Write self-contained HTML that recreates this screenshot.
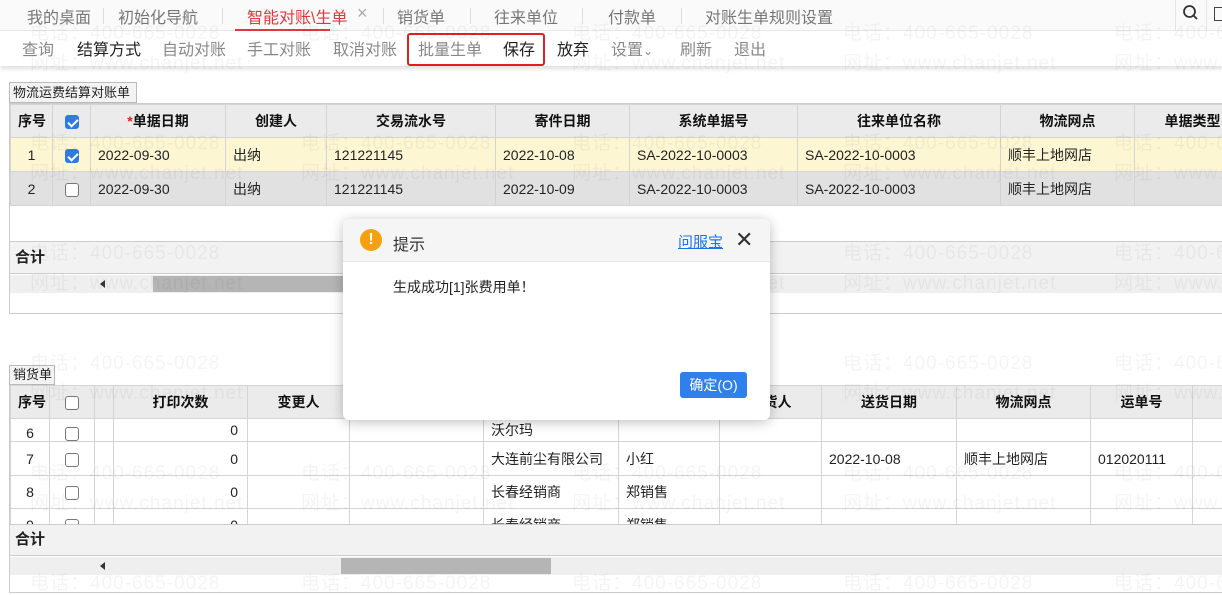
<!DOCTYPE html>
<html><head><meta charset="utf-8"><style>
*{margin:0;padding:0;box-sizing:border-box}
body{width:1222px;height:595px;overflow:hidden;background:#fff;position:relative;font-family:"Liberation Sans","Noto Sans CJK SC",sans-serif;color:#222}
.a{position:absolute}
.tab{position:absolute;top:4px;font-size:16px;color:#777;white-space:nowrap}
.sep{position:absolute;top:8px;width:1px;height:16px;background:#ddd}
.tb{position:absolute;top:36px;font-size:16px;color:#888;white-space:nowrap}
.tb.b{color:#222}
table{border-collapse:collapse;position:absolute;table-layout:fixed}
td,th{border:1px solid #d4d4d4;font-size:14px;white-space:nowrap;overflow:hidden;padding:0 7px;text-align:left;font-weight:normal}
th{background:#ebebeb;font-weight:bold;text-align:center;color:#111}
.c{text-align:center;padding:0}
.r{text-align:right;padding-right:9px}
.cb{display:inline-block;width:14px;height:14px;border:1px solid #777;border-radius:3px;background:#fff;vertical-align:middle}
.cb.on{background:#2f7be0;border-color:#2f7be0;position:relative}
.cb.on:after{content:"";position:absolute;left:4px;top:1px;width:4px;height:8px;border:solid #fff;border-width:0 2px 2px 0;transform:rotate(45deg)}
.wm{position:absolute;font-size:19px;color:rgba(0,0,0,0.045);white-space:nowrap;letter-spacing:1px;pointer-events:none}
</style></head><body>
<!-- tab bar -->
<div class="a" style="left:0;top:0;width:1222px;height:31px;background:#fafafa;border-bottom:1px solid #e8e8e8"></div>
<div class="tab" style="left:27px">我的桌面</div><div class="sep" style="left:103px"></div>
<div class="tab" style="left:118px">初始化导航</div><div class="sep" style="left:222px"></div>
<div class="tab" style="left:247px;color:#e0383e">智能对账\生单</div><div class="tab" style="left:357px;top:3px;color:#aaa;font-size:18px">×</div>
<div class="a" style="left:235px;top:29px;width:95px;height:2px;background:#e0383e"></div>
<div class="sep" style="left:383px"></div>
<div class="tab" style="left:397px">销货单</div><div class="sep" style="left:470px"></div>
<div class="tab" style="left:494px">往来单位</div><div class="sep" style="left:582px"></div>
<div class="tab" style="left:608px">付款单</div><div class="sep" style="left:681px"></div>
<div class="tab" style="left:705px">对账生单规则设置</div>
<div class="sep" style="left:1175px;top:0;height:31px;background:#e4e4e4"></div>
<svg class="a" style="left:1182px;top:4px" width="18" height="18" viewBox="0 0 18 18"><circle cx="7.5" cy="7.5" r="5.5" fill="none" stroke="#333" stroke-width="1.8"/><path d="M11.5 11.5L15 15" stroke="#333" stroke-width="1.8"/></svg>
<div class="sep" style="left:1206px;top:0;height:31px;background:#e4e4e4"></div>
<div class="a" style="left:1214px;top:7px;width:8px;height:14px;border:1.5px solid #444;border-right:none"></div>
<!-- toolbar -->
<div class="a" style="left:0;top:32px;width:1222px;height:34px;background:#fff;box-shadow:0 3px 4px rgba(0,0,0,.12)"></div>
<div class="tb" style="left:22px">查询</div>
<div class="tb b" style="left:77px">结算方式</div>
<div class="tb" style="left:162px">自动对账</div>
<div class="tb" style="left:247px">手工对账</div>
<div class="tb" style="left:333px">取消对账</div>
<div class="tb" style="left:418px">批量生单</div>
<div class="tb b" style="left:503px">保存</div>
<div class="tb b" style="left:557px">放弃</div>
<div class="tb" style="left:611px">设置<span style="font-size:12px">⌄</span></div>
<div class="tb" style="left:680px">刷新</div>
<div class="tb" style="left:734px">退出</div>
<div class="a" style="left:407px;top:33px;width:138px;height:33px;border:2px solid #e02020;border-radius:3px"></div>
<!-- top panel -->
<div class="a" style="left:9px;top:82px;width:128px;height:21px;border:1px solid #bbb;background:#f3f3f3;font-size:13px;line-height:19px;padding-left:3px">物流运费结算对账单</div>
<div class="a" style="left:9px;top:103px;width:1214px;height:211px;border:1px solid #ccc"></div>
<table style="left:10px;top:104px;width:1240px">
<colgroup><col style="width:42px"><col style="width:38px"><col style="width:135px"><col style="width:101px"><col style="width:169px"><col style="width:134px"><col style="width:168px"><col style="width:203px"><col style="width:134px"><col style="width:116px"></colgroup>
<tr style="height:33px"><th>序号</th><th class="c"><span class="cb on"></span></th><th><span style="color:#e02020">*</span>单据日期</th><th>创建人</th><th>交易流水号</th><th>寄件日期</th><th>系统单据号</th><th>往来单位名称</th><th>物流网点</th><th>单据类型</th></tr>
<tr style="height:34px;background:#fdf6d3"><td class="c">1</td><td class="c"><span class="cb on"></span></td><td>2022-09-30</td><td>出纳</td><td>121221145</td><td>2022-10-08</td><td>SA-2022-10-0003</td><td>SA-2022-10-0003</td><td>顺丰上地网店</td><td></td></tr>
<tr style="height:34px;background:#e1e1e1"><td class="c">2</td><td class="c"><span class="cb"></span></td><td>2022-09-30</td><td>出纳</td><td>121221145</td><td>2022-10-09</td><td>SA-2022-10-0003</td><td>SA-2022-10-0003</td><td>顺丰上地网店</td><td></td></tr>
</table>
<div class="a" style="left:10px;top:241px;width:1212px;height:33px;background:#f2f2f2;border-top:1px solid #ccc;border-bottom:1px solid #ccc;font-weight:bold;font-size:15px;line-height:32px;padding-left:5px">合计</div>
<div class="a" style="left:10px;top:275px;width:1212px;height:18px;background:#efefef"></div>
<div class="a" style="left:100px;top:280px;width:0;height:0;border:4px solid transparent;border-right:5px solid #333;border-left:none"></div>
<div class="a" style="left:153px;top:276px;width:400px;height:16px;background:#b5b5b5"></div>
<!-- bottom panel -->
<div class="a" style="left:9px;top:365px;width:46px;height:20px;border:1px solid #bbb;background:#f3f3f3;font-size:13px;line-height:18px;padding-left:3px">销货单</div>
<div class="a" style="left:9px;top:385px;width:1214px;height:208px;border:1px solid #ccc"></div>
<div class="a" style="left:10px;top:385px;width:1212px;height:140px;overflow:hidden">
<table style="left:0;top:0;width:1260px">
<colgroup><col style="width:39px"><col style="width:45px"><col style="width:19px"><col style="width:134px"><col style="width:102px"><col style="width:134px"><col style="width:135px"><col style="width:101px"><col style="width:102px"><col style="width:135px"><col style="width:134px"><col style="width:102px"><col style="width:78px"></colgroup>
<tr style="height:33px"><th>序号</th><th class="c"><span class="cb"></span></th><th></th><th>打印次数</th><th>变更人</th><th></th><th></th><th></th><th>送货人</th><th>送货日期</th><th>物流网点</th><th>运单号</th><th>车</th></tr>
<tr style="height:23px"><td class="c" style="vertical-align:bottom">6</td><td class="c" style="vertical-align:bottom"><span class="cb"></span></td><td></td><td class="r">0</td><td></td><td></td><td>沃尔玛</td><td></td><td></td><td></td><td></td><td></td><td></td></tr>
<tr style="height:34px"><td class="c">7</td><td class="c"><span class="cb"></span></td><td></td><td class="r">0</td><td></td><td></td><td>大连前尘有限公司</td><td>小红</td><td></td><td>2022-10-08</td><td>顺丰上地网店</td><td>012020111</td><td></td></tr>
<tr style="height:33px"><td class="c">8</td><td class="c"><span class="cb"></span></td><td></td><td class="r">0</td><td></td><td></td><td>长春经销商</td><td>郑销售</td><td></td><td></td><td></td><td></td><td></td></tr>
<tr style="height:33px"><td class="c">9</td><td class="c"><span class="cb"></span></td><td></td><td class="r">0</td><td></td><td></td><td>长春经销商</td><td>郑销售</td><td></td><td></td><td></td><td></td><td></td></tr>
</table></div>
<div class="a" style="left:10px;top:524px;width:1212px;height:32px;background:#f2f2f2;border-top:1px solid #ccc;border-bottom:1px solid #ccc;font-weight:bold;font-size:15px;line-height:30px;padding-left:5px">合计</div>
<div class="a" style="left:10px;top:557px;width:1212px;height:18px;background:#efefef"></div>
<div class="a" style="left:100px;top:562px;width:0;height:0;border:4px solid transparent;border-right:5px solid #333;border-left:none"></div>
<div class="a" style="left:341px;top:558px;width:210px;height:16px;background:#b5b5b5"></div>
<!-- watermarks -->
<div class="a" style="left:0;top:0;width:1222px;height:595px;overflow:hidden;z-index:5">
<div class="wm" style="left:30px;top:18px">电话：400-665-0028</div><div class="wm" style="left:301px;top:18px">电话：400-665-0028</div><div class="wm" style="left:572px;top:18px">电话：400-665-0028</div><div class="wm" style="left:843px;top:18px">电话：400-665-0028</div><div class="wm" style="left:1114px;top:18px">电话：400-665-0028</div>
<div class="wm" style="left:30px;top:48px">网址：www.chanjet.net</div><div class="wm" style="left:572px;top:48px">网址：www.chanjet.net</div><div class="wm" style="left:843px;top:48px">网址：www.chanjet.net</div><div class="wm" style="left:1114px;top:48px">网址：www.chanjet.net</div>
<div class="wm" style="left:30px;top:128px">电话：400-665-0028</div><div class="wm" style="left:301px;top:128px">电话：400-665-0028</div><div class="wm" style="left:572px;top:128px">电话：400-665-0028</div><div class="wm" style="left:843px;top:128px">电话：400-665-0028</div><div class="wm" style="left:1114px;top:128px">电话：400-665-0028</div>
<div class="wm" style="left:30px;top:158px">网址：www.chanjet.net</div><div class="wm" style="left:301px;top:158px">网址：www.chanjet.net</div><div class="wm" style="left:572px;top:158px">网址：www.chanjet.net</div><div class="wm" style="left:843px;top:158px">网址：www.chanjet.net</div><div class="wm" style="left:1114px;top:158px">网址：www.chanjet.net</div>
<div class="wm" style="left:30px;top:238px">电话：400-665-0028</div><div class="wm" style="left:572px;top:238px">电话：400-665-0028</div><div class="wm" style="left:843px;top:238px">电话：400-665-0028</div><div class="wm" style="left:1114px;top:238px">电话：400-665-0028</div>
<div class="wm" style="left:30px;top:268px">网址：www.chanjet.net</div><div class="wm" style="left:572px;top:268px">网址：www.chanjet.net</div><div class="wm" style="left:843px;top:268px">网址：www.chanjet.net</div><div class="wm" style="left:1114px;top:268px">网址：www.chanjet.net</div>
<div class="wm" style="left:30px;top:348px">电话：400-665-0028</div><div class="wm" style="left:572px;top:348px">电话：400-665-0028</div><div class="wm" style="left:843px;top:348px">电话：400-665-0028</div><div class="wm" style="left:1114px;top:348px">电话：400-665-0028</div>
<div class="wm" style="left:30px;top:378px">网址：www.chanjet.net</div><div class="wm" style="left:843px;top:378px">网址：www.chanjet.net</div><div class="wm" style="left:1114px;top:378px">网址：www.chanjet.net</div>
<div class="wm" style="left:30px;top:458px">电话：400-665-0028</div><div class="wm" style="left:301px;top:458px">电话：400-665-0028</div><div class="wm" style="left:572px;top:458px">电话：400-665-0028</div><div class="wm" style="left:843px;top:458px">电话：400-665-0028</div><div class="wm" style="left:1114px;top:458px">电话：400-665-0028</div>
<div class="wm" style="left:30px;top:488px">网址：www.chanjet.net</div><div class="wm" style="left:301px;top:488px">网址：www.chanjet.net</div><div class="wm" style="left:572px;top:488px">网址：www.chanjet.net</div><div class="wm" style="left:843px;top:488px">网址：www.chanjet.net</div><div class="wm" style="left:1114px;top:488px">网址：www.chanjet.net</div>
<div class="wm" style="left:30px;top:568px">电话：400-665-0028</div><div class="wm" style="left:301px;top:568px">电话：400-665-0028</div><div class="wm" style="left:572px;top:568px">电话：400-665-0028</div><div class="wm" style="left:843px;top:568px">电话：400-665-0028</div><div class="wm" style="left:1114px;top:568px">电话：400-665-0028</div>
</div>
<!-- dialog -->
<div class="a" style="left:343px;top:219px;width:427px;height:201px;background:#fff;border-radius:6px;box-shadow:0 2px 12px rgba(0,0,0,.25);z-index:10;overflow:hidden">
<div class="a" style="left:0;top:0;width:427px;height:43px;background:#f5f5f5;border-bottom:1px solid #e6e6e6"></div>
<div class="a" style="left:17px;top:10px;width:22px;height:22px;border-radius:50%;background:#f5a00f;color:#fff;font-weight:bold;font-size:16px;line-height:22px;text-align:center">!</div>
<div class="a" style="left:50px;top:12px;font-size:16px;color:#333">提示</div>
<div class="a" style="left:335px;top:12px;font-size:15px;color:#1a73e8;text-decoration:underline">问服宝</div>
<div class="a" style="left:392px;top:10px;font-size:22px;line-height:22px;color:#333">✕</div>
<div class="a" style="left:50px;top:58px;font-size:14px;color:#222">生成成功[1]张费用单！</div>
<div class="a" style="left:337px;top:153px;width:67px;height:26px;background:#2f80ed;border-radius:3px;color:#fff;font-size:14px;line-height:26px;text-align:center">确定(O)</div>
</div>
</body></html>
